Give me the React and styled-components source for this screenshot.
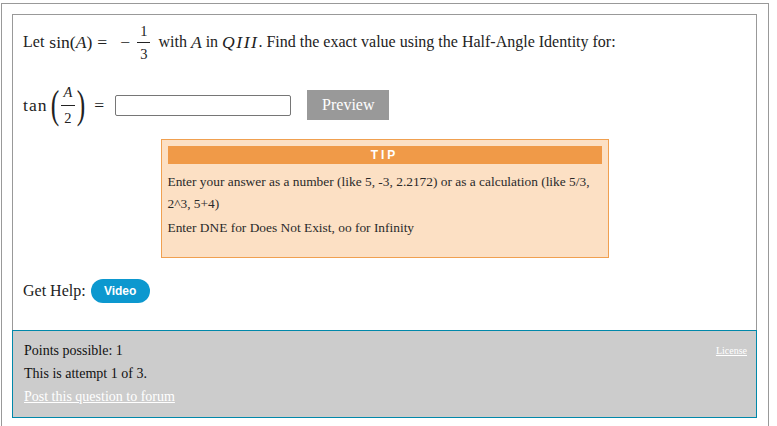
import React from "react";
import styled, { createGlobalStyle } from "styled-components";

const Global = createGlobalStyle`
  html, body { margin: 0; padding: 0; background: #fff; }
  body { font-family: "Liberation Serif", "Times New Roman", serif; color: #222; }
  * { box-sizing: border-box; }
`;

const Outer = styled.div`
  margin: 3px 0 0 1px;
  width: 768px;
  border: 1px solid #999;
  padding: 10px 11px 20px 10px;
`;

const Card = styled.div`
  width: 745px;
  border: 1px solid #999;
  display: flex;
  flex-direction: column;
`;

const Body = styled.div`
  padding: 7px 10px 0 10px;
  display: flex;
  flex-direction: column;
`;

const Row = styled.div`
  display: flex;
  align-items: center;
  height: ${(p) => p.$h || 40}px;
  margin-top: ${(p) => p.$mt || 0}px;
  font-size: 16px;
  white-space: pre;
`;

const MathSpan = styled.span`
  display: inline-flex;
  align-items: center;
  font-size: 17.6px;
  margin: ${(p) => p.$m || "0"};
`;

const It = styled.span`
  font-style: italic;
  letter-spacing: ${(p) => p.$ls || 0}px;
`;

const Fn = styled.span`
  letter-spacing: ${(p) => p.$ls || 0}px;
`;

const Op = styled.span`
  margin: 0 ${(p) => p.$r ?? 5}px 0 ${(p) => p.$l ?? 5}px;
`;

const Frac = styled.span`
  display: inline-flex;
  flex-direction: column;
  align-items: center;
  font-size: 14.5px;
  line-height: 14px;
  margin: ${(p) => p.$m || "0"};
`;

const Num = styled.span`
  display: block;
  padding: 0 ${(p) => p.$px || 1}px ${(p) => p.$gap || 4}px;
  border-bottom: 1px solid #222;
  text-align: center;
`;

const Den = styled.span`
  display: block;
  padding-top: ${(p) => p.$gap || 4}px;
`;

const BigParen = styled.span`
  display: inline-block;
  font-size: 30px;
  line-height: 30px;
  transform: scale(0.85, 1.3);
  margin: ${(p) => p.$m || "0"};
`;

const Input = styled.input`
  width: 176px;
  height: 21px;
  border: 1px solid #767676;
  border-radius: 2px;
  margin-left: 11px;
  padding: 0 4px;
  font-size: 14px;
`;

const PreviewBtn = styled.button`
  width: 82px;
  height: 30px;
  margin-left: 16px;
  border: none;
  background: #999;
  color: #fff;
  font-family: "Liberation Serif", serif;
  font-size: 16px;
  padding: 0;
`;

const Tip = styled.div`
  width: 448px;
  margin: 14px auto 0;
  border: 1px solid #f0a050;
  background: #fce0c4;
  padding: 6px 6px 18px 6px;
  font-size: 13.4px;
  color: #2a2a2a;
`;

const TipHead = styled.div`
  height: 18px;
  background: #f09a48;
  color: #fff;
  font-family: "Liberation Sans", Arial, sans-serif;
  font-weight: 700;
  font-size: 12px;
  letter-spacing: 3px;
  line-height: 18px;
  text-align: center;
`;

const TipText = styled.p`
  margin: ${(p) => p.$mt || 0}px 0 0;
  line-height: 22px;
`;

const VideoBtn = styled.button`
  height: 24px;
  width: 59px;
  margin-left: 5px;
  border: none;
  border-radius: 12px;
  background: #0c98cf;
  color: #fff;
  font-family: "Liberation Sans", Arial, sans-serif;
  font-weight: 700;
  font-size: 12px;
  padding: 0;
`;

const Footer = styled.div`
  margin: 27px -1px -1px -1px;
  border: 1px solid #0088aa;
  background: #ccc;
  padding: 8px 9px 9px 11px;
  font-size: 14px;
  color: #111;
  display: flex;
  justify-content: space-between;
  align-items: flex-start;
`;

const FooterLines = styled.div`
  display: flex;
  flex-direction: column;
`;

const Line = styled.div`
  line-height: 23px;
`;

const WhiteLink = styled.a`
  color: #fff;
  text-decoration: underline;
  font-size: ${(p) => p.$fs || 14}px;
  line-height: ${(p) => p.$lh || 23}px;
`;

export default function App() {
  return (
    <>
      <Global />
      <Outer>
        <Card>
          <Body>
            <Row $h={40}>
              <span>Let </span>
              <MathSpan $m="0 0 0 1px">
                <span>sin(</span>
                <It>A</It>
                <span>)</span>
                <Op $l={5} $r={5}>=</Op>
                <Op $l={8} $r={7}>−</Op>
                <Frac>
                  <Num $px={3}>1</Num>
                  <Den>3</Den>
                </Frac>
              </MathSpan>
              <span>  with </span>
              <MathSpan><It>A</It></MathSpan>
              <span> in </span>
              <MathSpan><It $ls={1.5}>QIII</It></MathSpan>
              <span>. Find the exact value using the Half-Angle Identity for:</span>
            </Row>
            <Row $h={40} $mt={23}>
              <MathSpan>
                <Fn $ls={1}>tan</Fn>
                <BigParen $m="0 0 0 2px">(</BigParen>
                <Frac $m="0 1px">
                  <Num $px={3} $gap={6}><It>A</It></Num>
                  <Den $gap={5}>2</Den>
                </Frac>
                <BigParen>)</BigParen>
                <Op $l={8} $r={0}>=</Op>
              </MathSpan>
              <Input type="text" />
              <PreviewBtn>Preview</PreviewBtn>
            </Row>
            <Tip>
              <TipHead>TIP</TipHead>
              <TipText $mt={7}>
                Enter your answer as a number (like 5, -3, 2.2172) or as a calculation (like 5/3, 2^3, 5+4)
              </TipText>
              <TipText $mt={2}>Enter DNE for Does Not Exist, oo for Infinity</TipText>
            </Tip>
            <Row $h={24} $mt={21}>
              <span>Get Help:</span>
              <VideoBtn>Video</VideoBtn>
            </Row>
          </Body>
          <Footer>
            <FooterLines>
              <Line>Points possible: 1</Line>
              <Line>This is attempt 1 of 3.</Line>
              <WhiteLink href="#">Post this question to forum</WhiteLink>
            </FooterLines>
            <WhiteLink href="#" $fs={10} $lh={23}>License</WhiteLink>
          </Footer>
        </Card>
      </Outer>
    </>
  );
}
